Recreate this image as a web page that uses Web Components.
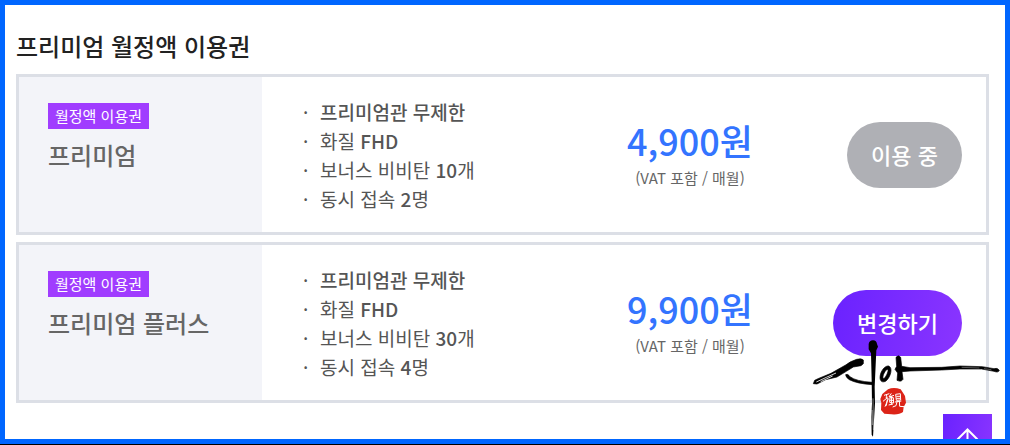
<!DOCTYPE html>
<html lang="ko">
<head>
<meta charset="utf-8">
<title>프리미엄 월정액 이용권</title>
<style>
  body { margin: 0; background: #000; font-family: "Noto Sans CJK KR", "Noto Sans", sans-serif; }
</style>
</head>
<body>
<pass-page>
  <span slot="heading">프리미엄 월정액 이용권</span>
  <pass-card>
    <span slot="badge">월정액 이용권</span>
    <span slot="name">프리미엄</span>
    <pass-feature><b>프리미엄관 무제한</b></pass-feature>
    <pass-feature>화질 <b>FHD</b></pass-feature>
    <pass-feature>보너스 비비탄 <b>10</b>개</pass-feature>
    <pass-feature>동시 접속 <b>2</b>명</pass-feature>
    <span slot="price">4,900원</span>
    <span slot="note">(VAT 포함 / 매월)</span>
    <pass-button slot="action" disabled>이용 중</pass-button>
  </pass-card>
  <pass-card>
    <span slot="badge">월정액 이용권</span>
    <span slot="name">프리미엄 플러스</span>
    <pass-feature><b>프리미엄관 무제한</b></pass-feature>
    <pass-feature>화질 <b>FHD</b></pass-feature>
    <pass-feature>보너스 비비탄 <b>30</b>개</pass-feature>
    <pass-feature>동시 접속 <b>4</b>명</pass-feature>
    <span slot="price">9,900원</span>
    <span slot="note">(VAT 포함 / 매월)</span>
    <pass-button slot="action">변경하기</pass-button>
  </pass-card>
  <top-button slot="float"></top-button>
  <brush-signature slot="float"></brush-signature>
</pass-page>

<script>
const define = (name, html, setup) => {
  const template = document.createElement('template');
  template.innerHTML = html;
  customElements.define(name, class extends HTMLElement {
    constructor() {
      super();
      this.attachShadow({ mode: 'open' }).append(template.content.cloneNode(true));
    }
    connectedCallback() { if (setup) setup(this); }
  });
};

define('pass-page', `
<style>
  :host { display: block; position: relative; box-sizing: border-box; height: calc(100vh - 1px);
    overflow: hidden; border: 5px solid #06f; background: #fff; }
  main { padding: 23px 16px 0 11px; }
  h1 { margin: 0 0 10px; font-size: 24px; line-height: 36px; font-weight: 500; color: #222; }
  section { display: flex; flex-direction: column; gap: 7px; }
</style>
<main>
  <h1><slot name="heading"></slot></h1>
  <section><slot></slot></section>
</main>
<slot name="float"></slot>`);

define('pass-card', `
<style>
  :host { display: grid; grid-template-columns: 243px minmax(0, 1fr) 156px 218px;
    border: 3px solid #dcdfe6; background: #fff; }
  .side { background: #f3f4f9; padding: 26px 29px; }
  .badge { display: table; padding: 0 7px; background: #a03cff; color: #fff;
    font-size: 15px; line-height: 26px; font-weight: 400; }
  h2 { margin: 8px 0 0; font-size: 24px; line-height: 36px; font-weight: 500; color: #666; white-space: nowrap; }
  ul { margin: 0; padding: 20px 0 19px 41px; list-style: none; }
  .price { display: flex; flex-direction: column; justify-content: center; align-items: center; }
  .amount { font-size: 36px; line-height: 40px; font-weight: 500; color: #3374ff; }
  .note { font-size: 15px; line-height: 24px; color: #666; margin-top: 6px; white-space: nowrap; }
  .action { display: flex; align-items: center; justify-content: flex-end; padding-right: 24px; }
</style>
<div class="side">
  <div class="badge"><slot name="badge"></slot></div>
  <h2><slot name="name"></slot></h2>
</div>
<ul><slot></slot></ul>
<div class="price">
  <div class="amount"><slot name="price"></slot></div>
  <div class="note"><slot name="note"></slot></div>
</div>
<div class="action"><slot name="action"></slot></div>`);

define('pass-feature', `
<style>
  :host { display: flex; font-size: 19px; line-height: 29px; color: #555; white-space: nowrap; }
  i { flex: none; width: 17px; font-style: normal; }
  ::slotted(b) { font-weight: 500; }
</style>
<i>·</i><span><slot></slot></span>`, el => el.setAttribute('role', 'listitem'));

define('pass-button', `
<style>
  :host { display: block; }
  button { display: block; height: 66px; padding: 0 24px 2px; border: 0; border-radius: 33px;
    background: linear-gradient(100deg, #6a22ff, #8a35ff); color: #fff;
    font-family: inherit; font-size: 22px; line-height: 32px; font-weight: 500; }
  button:disabled { background: #afb0b5; }
</style>
<button type="button"><slot></slot></button>`,
  el => { el.shadowRoot.querySelector('button').disabled = el.hasAttribute('disabled'); });

define('top-button', `
<style>
  :host { display: block; position: absolute; right: 13px; bottom: -24px; }
  button { display: block; width: 49px; height: 49px; padding: 0; border: 0;
    background: linear-gradient(100deg, #6a22ff, #8a35ff); }
  svg { display: block; }
</style>
<button type="button" aria-label="맨 위로">
  <svg width="49" height="49" viewBox="0 0 49 49" fill="none" stroke="#fff" stroke-width="2">
    <path d="M24.5 36V15.5M14.5 25.5l10-10 10 10"/>
  </svg>
</button>`);

define('brush-signature', `
<style>
  :host { display: block; position: absolute; right: 5px; bottom: 1px; pointer-events: none; }
  svg { display: block; }
</style>
<svg width="188" height="98" viewBox="36 210 564 294" aria-hidden="true">
  <path d="M206 222Q208 211 219 211Q230 212 231 222L234 230L229 241L227 285L224 350L225 400L222 450L219 500L215 494L214 440L216 400L215 330L213 250L206 238Z"/>
  <path d="M219 385L220 480M216 420L217 465" stroke="#fff" stroke-width="1.5"/>
  <path d="M190 270Q184 264 170 268Q153 273 137 285L93 310L54 326L44 331L40 341L51 342L77 329L111 321L139 304L160 291L183 287L190 281Z" stroke="#000" stroke-width="2"/>
  <path d="M49 336L79 322L108 309M62 335L98 318" fill="none" stroke="#fff" stroke-width="2.5"/>
  <path d="M137 314Q143 310 150 320Q168 334 217 337V344Q170 341 148 329Q137 322 137 314Z" stroke="#000" stroke-width="2"/>
  <path fill-rule="evenodd" stroke="#000" stroke-width="2" d="M240 322C241 303 255 286 266 288C280 294 271 322 258 333C247 339 240 334 240 322ZM249 324C252 332 266 307 264 299C259 294 247 316 249 324Z"/>
  <path stroke="#000" stroke-width="2" d="M288 262Q295 253 302 262L305 289L330 293L425 292L480 288L547 290L582 296Q592 292 598 301Q595 309 582 304L545 297L480 297L425 300L330 303L306 305L309 328Q304 337 291 331L293 309L285 298L290 289Z"/>
  <path d="M485 292L538 294M552 296L574 299" stroke="#fff" stroke-width="1"/>
  <path fill="#dc2418" d="M264 358Q281 350 302 358L309 368L315 378L318 398L311 411L309 426Q298 435 274 433L253 431L243 420L244 398L241 387L247 372Z"/>
  <g fill="none" stroke="#fff" stroke-width="3">
    <path d="M252 376L268 371M259 372L261 384L249 394M257 382L265 386L255 410M262 388L259 407M274 370L267 381L282 376M270 382L269 397L281 399L280 383L270 383M268 391H282M275 378L274 404M266 405L279 402M287 373L301 371L302 390L289 391ZM289 379H300M289 385H300M285 396L304 393M292 392L288 407L278 411M298 392L299 409L312 410"/>
  </g>
</svg>`);
</script>
</body>
</html>
